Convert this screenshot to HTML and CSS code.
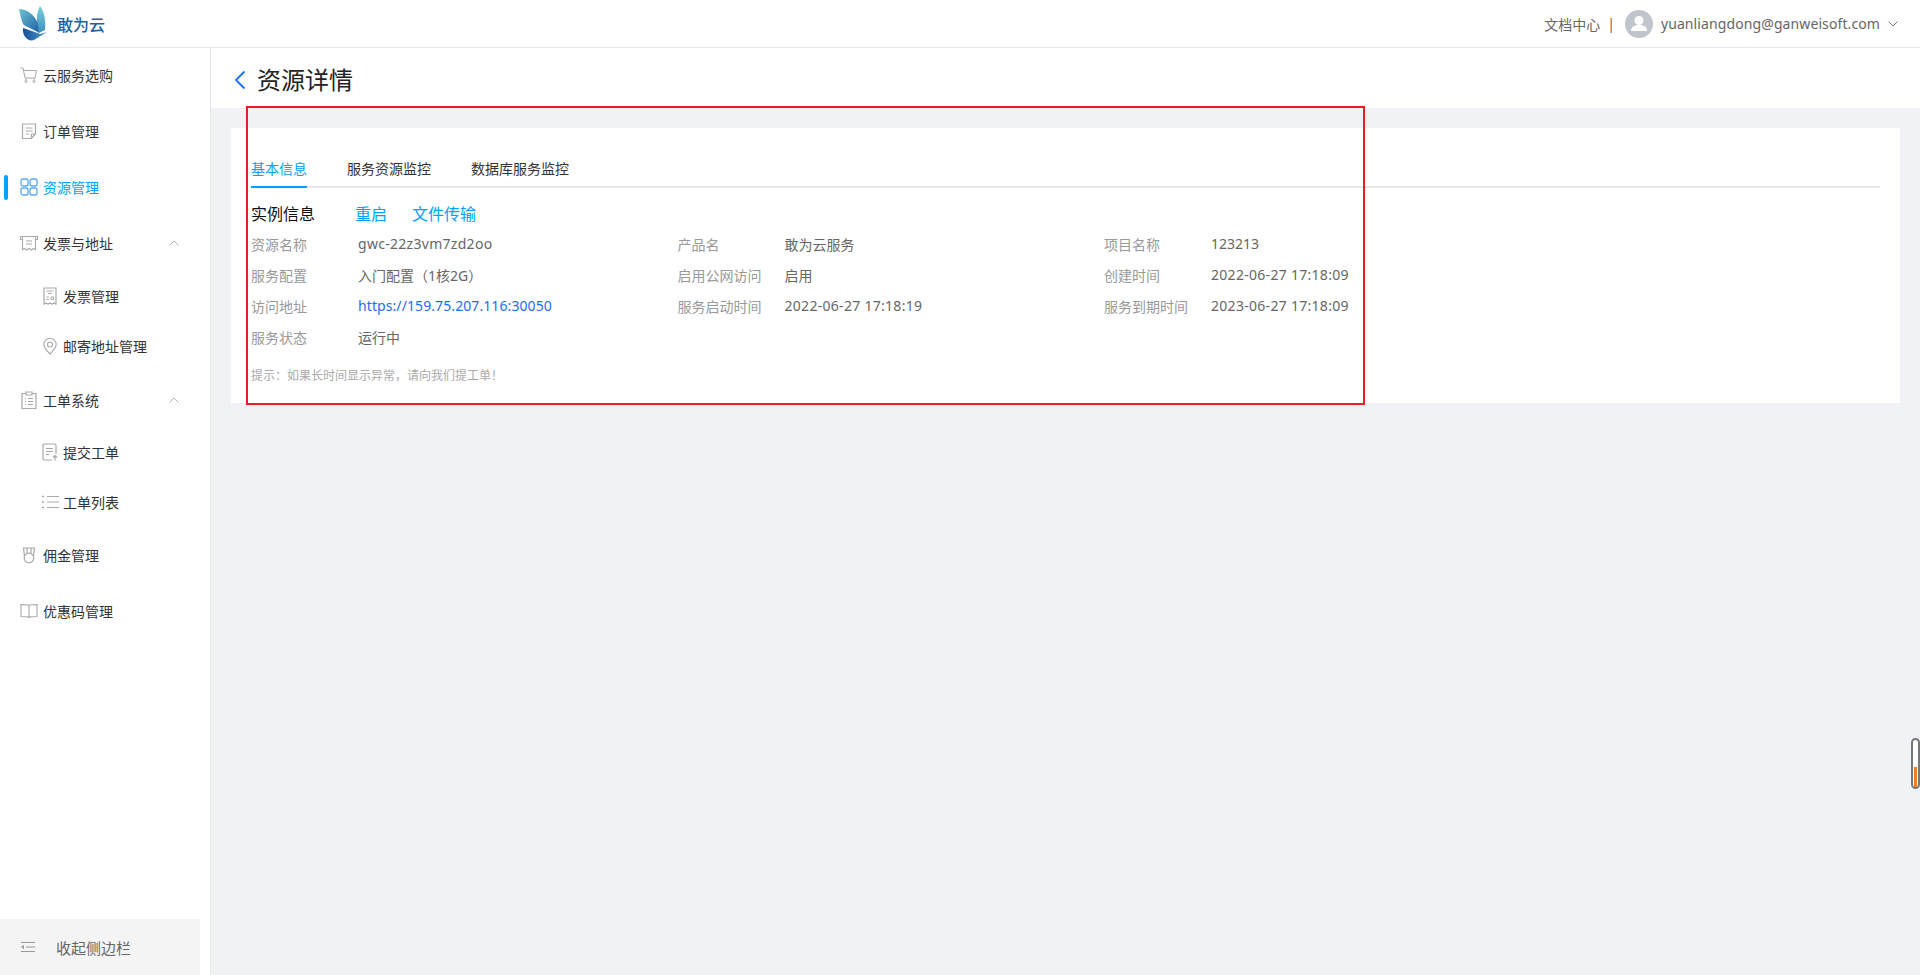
FILE: index.html
```html
<!DOCTYPE html>
<html lang="zh-CN">
<head>
<meta charset="utf-8">
<title>资源详情</title>
<link rel="stylesheet" href="styles.css">
</head>
<body>
<div class="app">
  <header class="topbar">
    <a class="brand">
      <svg class="brand-mark" viewBox="0 0 32 36" width="32" height="36">
        <defs>
          <linearGradient id="wingA" x1="0" y1="0" x2="1" y2="1"><stop offset="0" stop-color="#6cc3d0"/><stop offset="1" stop-color="#1f5fa6"/></linearGradient>
          <linearGradient id="wingB" x1="0" y1="0" x2="0" y2="1"><stop offset="0" stop-color="#7fd0dc"/><stop offset="1" stop-color="#3a8fc2"/></linearGradient>
          <linearGradient id="wingC" x1="0" y1="0" x2="1" y2="0"><stop offset="0" stop-color="#174f9a"/><stop offset="1" stop-color="#4f9dc8"/></linearGradient>
        </defs>
        <path d="M21 0C25 5 27 13 26 24L20 27C17 17 17 7 21 0Z" fill="url(#wingB)"/>
        <path d="M0 3C8 3 16 9 19 18L20 27C13 22 6 21 4 18C2 13 1 8 0 3Z" fill="url(#wingA)"/>
        <path d="M4 22C10 24 16 26 21 28L28 26L15 34C9 36 3 30 4 22Z" fill="url(#wingC)"/>
      </svg>
      <span class="brand-name">敢为云</span>
    </a>
    <nav class="topnav">
      <a class="doc-link">文档中心</a>
      <span class="divider">|</span>
      <span class="avatar">
        <svg viewBox="0 0 28 28" width="28" height="28"><circle cx="14" cy="10.500" r="4.500" fill="#fff"/><path d="M6 21c0-4.500 3.600-6 8-6s8 1.500 8 6z" fill="#fff"/></svg>
      </span>
      <span class="user-name">yuanliangdong@ganweisoft.com</span>
      <svg class="caret" viewBox="0 0 10 6" width="10" height="6"><path d="M.5.500 5 5 9.500.500" fill="none" stroke="#777" stroke-width="1"/></svg>
    </nav>
  </header>

  <div class="body">
    <aside class="sidebar">
      <ul class="menu">
        <li class="item">
          <svg class="ico" viewBox="0 0 18 18"><path d="M.5 2H3l2 10h10l1.500-7.500H3.500M6 12v2M14 12v2" fill="none" stroke="#a9a9a9"/><circle cx="6" cy="15.500" r="1" fill="none" stroke="#a9a9a9"/><circle cx="14" cy="15.500" r="1" fill="none" stroke="#a9a9a9"/></svg>
          云服务选购
        </li>
        <li class="item">
          <svg class="ico" viewBox="0 0 18 18"><path d="M2.500 2h13v10l-4 4.500h-9zM6 6h6.500M6 9h6.500M6 12h3M11.500 16.500V12h4" fill="none" stroke="#a9a9a9" stroke-width="1.200"/></svg>
          订单管理
        </li>
        <li class="item active">
          <svg class="ico" viewBox="0 0 18 18"><g fill="none" stroke="#5aa9f5" stroke-width="1.300"><rect x="1" y="1" width="7" height="7" rx="2"/><rect x="10" y="1" width="7" height="7" rx="2"/><rect x="1" y="10" width="7" height="7" rx="2"/><rect x="10" y="10" width="7" height="7" rx="2"/></g></svg>
          资源管理
        </li>
        <li class="item has-sub">
          <svg class="ico" viewBox="0 0 18 18"><path d="M.5 2.500h17v3h-2M.5 2.500v3h2M2.500 3.500v12l2-1 2 1.500 2.500-1.500 2.500 1.500 2-1.500 2 1v-12M6 7h6M6 10h6" fill="none" stroke="#a9a9a9" stroke-width="1.100"/></svg>
          发票与地址
          <svg class="fold" viewBox="0 0 10 6"><path d="M.5 5.500 5 1l4.500 4.500" fill="none" stroke="#b5b5b5"/></svg>
        </li>
        <li class="sub">
          <svg class="ico" viewBox="0 0 18 18"><path d="M3 1h12v16l-2-.8-2 .8-2-.8-2 .8-2-.8-2 .8z" fill="none" stroke="#a9a9a9" stroke-width="1.200"/><path d="M5.500 4h7M7 6.500h4M5.500 10h2.500M5.500 12.500H8M10 10h2.500v2.500H10z" fill="none" stroke="#a9a9a9"/></svg>
          发票管理
        </li>
        <li class="sub">
          <svg class="ico" viewBox="0 0 18 18"><path d="M9 17C5 13 2.800 10.500 2.800 7.500a6.200 6.200 0 0 1 12.400 0C15.200 10.500 13 13 9 17Z" fill="none" stroke="#a9a9a9" stroke-width="1.100"/><circle cx="9" cy="7.500" r="2.500" fill="none" stroke="#a9a9a9" stroke-width="1.100"/></svg>
          邮寄地址管理
        </li>
        <li class="item has-sub second">
          <svg class="ico" viewBox="0 0 18 18"><path d="M6 2.500H2v15h14v-15h-4M6 1h6v3H6zM5 7.500h1M8 7.500h5M5 10.500h1M8 10.500h5M5 13.500h1M8 13.500h5" fill="none" stroke="#a9a9a9" stroke-width="1.200"/></svg>
          工单系统
          <svg class="fold" viewBox="0 0 10 6"><path d="M.5 5.500 5 1l4.500 4.500" fill="none" stroke="#b5b5b5"/></svg>
        </li>
        <li class="sub">
          <svg class="ico" viewBox="0 0 18 18"><path d="M11 17H3.500A1.500 1.500 0 0 1 2 15.500v-13A1.500 1.500 0 0 1 3.500 1h10A1.500 1.500 0 0 1 15 2.500V11M5 5.500h7M5 8.500h7M5 11.500h3M14 17.500v-5M12 14.500l2-2 2 2" fill="none" stroke="#a9a9a9" stroke-width="1.200"/></svg>
          提交工单
        </li>
        <li class="sub">
          <svg class="ico" viewBox="0 0 18 18"><path d="M6 3.500h12M6 9h12M6 14.500h12" fill="none" stroke="#a9a9a9" stroke-width="1.200"/><path d="M1 3.500h2M1 9h2M1 14.500h2" fill="none" stroke="#a9a9a9" stroke-width="1.600"/></svg>
          工单列表
        </li>
        <li class="item">
          <svg class="ico" viewBox="0 0 18 18"><circle cx="9" cy="12" r="4.800" fill="none" stroke="#a9a9a9" stroke-width="1.200"/><path d="M4.500 10 3.500 2h11l-1 8M7 7.500V2M11 7.500V2" fill="none" stroke="#a9a9a9" stroke-width="1.200"/></svg>
          佣金管理
        </li>
        <li class="item">
          <svg class="ico" viewBox="0 0 18 18"><path d="M9 3.500C7 2.500 4 2.500 1 2.500v12c3 0 6 0 8 1 2-1 5-1 8-1v-12c-3 0-6 0-8 1ZM9 3.500v12" fill="none" stroke="#a9a9a9" stroke-width="1.100"/></svg>
          优惠码管理
        </li>
      </ul>
      <div class="collapse">
        <svg class="collapse-ico" viewBox="0 0 14 12" width="14" height="12"><path d="M0 1.500h14M5 6h9M0 10.500h14" fill="none" stroke="#999" stroke-width="1.200"/><path d="M0 6l3-2.200v4.400z" fill="#999"/></svg>
        收起侧边栏
      </div>
    </aside>

    <main class="main">
      <div class="page-head">
        <svg class="back" viewBox="0 0 12 20" width="12" height="20"><path d="M10.500 1.500 2 10l8.500 8.500" fill="none" stroke="#1a6ef5" stroke-width="1.800"/></svg>
        <h1 class="page-title">资源详情</h1>
      </div>
      <div class="content">
        <section class="card">
          <div class="tabs">
            <a class="tab current">基本信息</a>
            <a class="tab">服务资源监控</a>
            <a class="tab">数据库服务监控</a>
          </div>
          <div class="section-head">
            <span class="section-title">实例信息</span>
            <a class="action first">重启</a>
            <a class="action">文件传输</a>
          </div>
          <dl class="facts">
            <div class="fact"><dt>资源名称</dt><dd class="code">gwc-22z3vm7zd2oo</dd></div>
            <div class="fact"><dt>产品名</dt><dd>敢为云服务</dd></div>
            <div class="fact"><dt>项目名称</dt><dd>123213</dd></div>
            <div class="fact"><dt>服务配置</dt><dd>入门配置（1核2G）</dd></div>
            <div class="fact"><dt>启用公网访问</dt><dd>启用</dd></div>
            <div class="fact"><dt>创建时间</dt><dd class="code">2022-06-27 17:18:09</dd></div>
            <div class="fact"><dt>访问地址</dt><dd class="url">https://159.75.207.116:30050</dd></div>
            <div class="fact"><dt>服务启动时间</dt><dd class="code">2022-06-27 17:18:19</dd></div>
            <div class="fact"><dt>服务到期时间</dt><dd class="code">2023-06-27 17:18:09</dd></div>
            <div class="fact"><dt>服务状态</dt><dd>运行中</dd></div>
          </dl>
          <p class="hint">提示：如果长时间显示异常，请向我们提工单！</p>
        </section>
      </div>
    </main>
  </div>
</div>

<div class="highlight-box"></div>
<div class="gauge"><span class="gauge-fill"></span></div>
</body>
</html>
```
FILE: styles.css
```css
* { box-sizing: border-box; }

html, body {
  margin: 0;
  height: 100%;
  overflow: hidden;
}

body {
  font-family: "Noto Sans", "Noto Sans CJK SC", sans-serif;
  font-size: 14px;
  color: #333;
  background: #fff;
}

.app {
  display: flex;
  flex-direction: column;
  height: 975px;
}

/* top bar */
.topbar {
  flex: 0 0 48px;
  display: flex;
  align-items: center;
  justify-content: space-between;
  padding: 0 22px 0 19px;
  border-bottom: 1px solid #e4e7ed;
  background: #fff;
}

.brand {
  display: flex;
  align-items: center;
  gap: 6px;
}

.brand-mark { display: block; }

.brand-name {
  font-size: 16px;
  font-weight: 500;
  color: #1f5fa6;
}

.topnav {
  display: flex;
  align-items: center;
  color: #666;
}

.divider { margin: 0 10px 0 7px; }

.avatar {
  width: 28px;
  height: 28px;
  border-radius: 50%;
  background: #c0c4cc;
  overflow: hidden;
  margin-right: 8px;
}

.avatar svg { display: block; }

.user-name { letter-spacing: .1px; }

.caret { margin-left: 8px; }

/* layout under the top bar */
.body {
  flex: 1;
  display: flex;
  min-height: 0;
}

/* side menu */
.sidebar {
  flex: 0 0 211px;
  display: flex;
  flex-direction: column;
  justify-content: space-between;
  border-right: 1px solid #e4e7ed;
  background: #fff;
}

.menu {
  list-style: none;
  margin: -1px 0 0;
  padding: 0;
}

.item,
.sub {
  display: flex;
  align-items: center;
  color: #333;
  white-space: nowrap;
  position: relative;
}

.item {
  height: 56px;
  padding-left: 20px;
}

.sub {
  height: 50px;
  padding-left: 41px;
}

.ico {
  width: 18px;
  height: 18px;
  margin-right: 5px;
  flex: none;
}

.sub .ico { margin-right: 4px; }

.item.second { margin: 1px 0 -1px; }

.item.active { color: #00a2ff; }

.item.active::before {
  content: "";
  position: absolute;
  left: 4px;
  top: 16px;
  width: 4px;
  height: 25px;
  border-radius: 2px;
  background: #00a2ff;
}

.fold {
  position: absolute;
  left: 169px;
  top: 25px;
  width: 10px;
  height: 6px;
}

.collapse {
  flex: 0 0 56px;
  width: 200px;
  display: flex;
  align-items: center;
  padding-left: 21px;
  background: #f4f4f5;
  color: #666;
  font-size: 15px;
}

.collapse-ico { margin-right: 21px; }

/* main column */
.main {
  flex: 1;
  min-width: 0;
  display: flex;
  flex-direction: column;
  background: #f0f2f5;
}

.page-head {
  flex: 0 0 60px;
  display: flex;
  align-items: center;
  padding: 4px 0 0 23px;
  background: #fff;
}

.back { margin-right: 11px; }

.page-title {
  margin: 0;
  font-size: 24px;
  font-weight: 400;
  line-height: 32px;
  color: #222;
}

.content { padding: 20px 20px 0; }

.card {
  height: 275px;
  padding: 28px 20px 0;
  background: #fff;
}

.tabs {
  display: flex;
  gap: 40px;
  height: 32px;
  border-bottom: 2px solid #e4e7ed;
}

.tab {
  height: 32px;
  line-height: 25px;
  color: #333;
}

.tab.current {
  color: #00a2ff;
  border-bottom: 2px solid #00a2ff;
}

.section-head {
  display: flex;
  align-items: center;
  height: 24px;
  margin-top: 13px;
  font-size: 16px;
}

.section-title { color: #111; }

.action { color: #00a2ff; margin-left: 25px; }
.action.first { margin-left: 40px; }

.facts {
  display: grid;
  grid-template-columns: repeat(3, 426.5px);
  grid-auto-rows: 31px;
  margin: 3px 0 0;
}

.fact {
  display: flex;
  align-items: center;
}

.fact dt {
  flex: 0 0 107px;
  color: #999;
}

.fact dd {
  margin: 0;
  color: #666;
}

.fact dd.code { letter-spacing: .29px; }

.fact dd.url {
  color: #1a6ef5;
  letter-spacing: .09px;
}

.hint {
  margin: 14px 0 0;
  font-size: 12px;
  line-height: 20px;
  color: #aaa;
}

/* red annotation rectangle drawn over the page */
.highlight-box {
  position: absolute;
  left: 246px;
  top: 106px;
  width: 1119px;
  height: 299px;
  border: 2px solid #ed1c24;
  pointer-events: none;
}

/* small status gauge at the right edge */
.gauge {
  position: absolute;
  left: 1911px;
  top: 738px;
  width: 9px;
  height: 51px;
  border: 2px solid #777;
  border-radius: 5px;
  background: #fff;
}

.gauge-fill {
  position: absolute;
  left: 1px;
  bottom: 0;
  width: 3px;
  height: 20px;
  background: #f47b20;
}
```
